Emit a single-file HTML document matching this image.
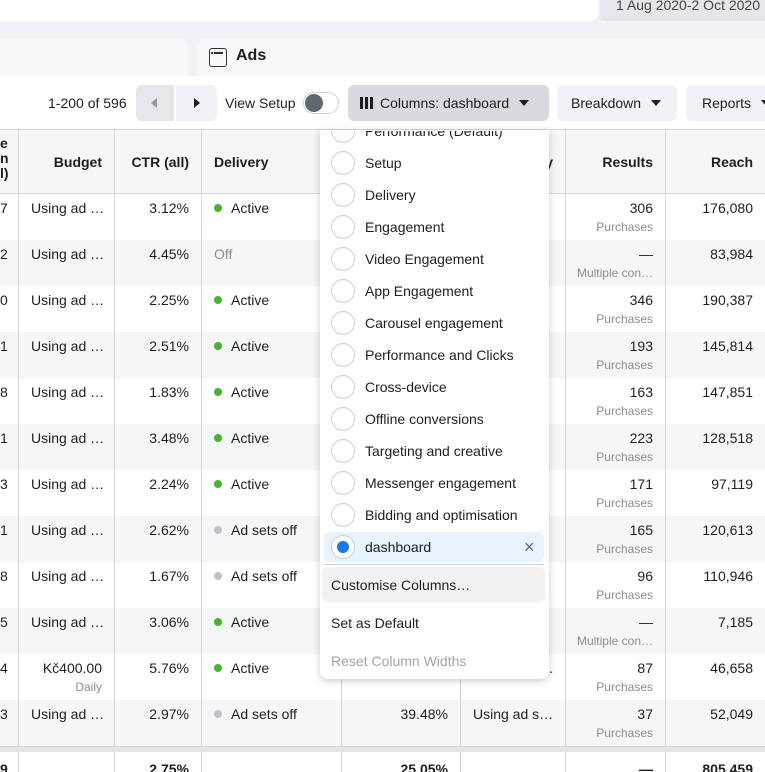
<!DOCTYPE html>
<html><head><meta charset="utf-8"><style>
*{box-sizing:border-box;margin:0;padding:0}
html,body{width:765px;height:772px;overflow:hidden}
body{background:#f0f2f5;font-family:"Liberation Sans",sans-serif;font-size:14px;color:#1c1e21;position:relative}
.a{position:absolute}
.row{position:absolute;left:0;width:765px;height:46px}
.c{position:absolute;top:0;height:100%;border-right:1px solid #d4d6da;padding-top:6px;white-space:nowrap}
.r{text-align:right;padding-right:12px}
.l{padding-left:12px}
.sub{font-size:12px;color:#8a8d91;margin-top:4px}
.dot{display:inline-block;width:8px;height:8px;border-radius:50%;background:#42b72a;margin-right:9px;vertical-align:1px}
.g{background:#bec3c9}
.btn{position:absolute;top:85px;height:36px;border-radius:6px;background:#f0f2f5;font-size:14px;line-height:36px;padding:0 14px;white-space:nowrap}
.tri{display:inline-block;width:0;height:0;border-left:5px solid transparent;border-right:5px solid transparent;border-top:6px solid #1c1e21;vertical-align:2px;margin-left:10px}
.mi{position:absolute;left:331px;height:32px;line-height:32px;width:210px}
.rad{position:absolute;left:0;top:4px;width:24px;height:24px;border:1px solid #ccd0d5;border-radius:50%;background:#fff}
.mi span{position:absolute;left:34px;top:0;white-space:nowrap}
</style></head><body>
<div class="a" style="left:0;top:0;width:598px;height:21px;background:#fff;border-radius:0 0 8px 0"></div>
<div class="a" style="left:600px;top:0;width:165px;height:21px;background:#e4e6e9;border-radius:0 0 0 6px;font-size:14px;line-height:10px;padding-left:16px;color:#444">1 Aug 2020-2 Oct 2020</div>
<div class="a" style="left:0;top:38px;width:188px;height:40px;background:#f7f8fa;border-radius:0 8px 0 0"></div>
<div class="a" style="left:197px;top:38px;width:568px;height:40px;background:#f7f8fa;border-radius:8px 0 0 0"></div>
<div class="a" style="left:209px;top:48px;width:18px;height:19px;border:1.5px solid #333;border-radius:3px"></div>
<div class="a" style="left:214px;top:52px;width:9px;height:1.5px;background:#333"></div>
<div class="a" style="left:211px;top:52px;width:2px;height:1.5px;background:#333"></div>
<div class="a" style="left:236px;top:47px;font-weight:bold;font-size:16px">Ads</div>
<div class="a" style="left:0;top:76px;width:765px;height:54px;background:#fff"></div>
<div class="a" style="left:48px;top:95px">1-200 of 596</div>
<div class="a" style="left:136px;top:85px;width:38px;height:36px;background:#e4e6e9;border-radius:6px 0 0 6px"></div>
<div class="a" style="left:176px;top:85px;width:41px;height:36px;background:#f0f2f5;border-radius:0 6px 6px 0"></div>
<div class="a" style="left:151px;top:98px;width:0;height:0;border-top:5px solid transparent;border-bottom:5px solid transparent;border-right:6px solid #999"></div>
<div class="a" style="left:194px;top:98px;width:0;height:0;border-top:5px solid transparent;border-bottom:5px solid transparent;border-left:6px solid #1c1e21"></div>
<div class="a" style="left:225px;top:95px">View Setup</div>
<div class="a" style="left:303px;top:92px;width:36px;height:22px;border:1px solid #ccd0d5;border-radius:11px;background:#fff"></div>
<div class="a" style="left:305px;top:94px;width:18px;height:18px;border-radius:50%;background:#606770"></div>
<div class="btn" style="left:348px;width:201px;background:#d8dadf;padding-left:12px"><span style="display:inline-block;width:3px;height:12px;background:#1c1e21;box-shadow:5px 0 #1c1e21,10px 0 #1c1e21;margin-right:17px;vertical-align:-1px"></span>Columns: dashboard<span class="tri"></span></div>
<div class="btn" style="left:557px;width:120px">Breakdown<span class="tri"></span></div>
<div class="btn" style="left:686px;width:100px;padding-left:16px">Reports<span class="tri"></span></div>
<div class="a" style="left:0;top:129px;width:765px;height:1px;background:#d4d6da"></div>

<div class="row" style="top:130px;height:64px;background:#f5f6f7;border-bottom:1px solid #d4d6da;font-weight:bold">
<div class="c" style="left:0;width:19px;padding-top:6px;line-height:15px;font-size:14px">e<br>n<br>l)</div>
<div class="c r" style="left:19px;width:96px;padding-top:24px">Budget</div>
<div class="c r" style="left:115px;width:87px;padding-top:24px">CTR (all)</div>
<div class="c l" style="left:202px;width:140px;padding-top:24px">Delivery</div>
<div class="c" style="left:342px;width:119px"></div>
<div class="c r" style="left:461px;width:105px;padding-top:24px">y</div>
<div class="c r" style="left:566px;width:100px;padding-top:24px">Results</div>
<div class="c r" style="left:666px;width:99px;padding-top:24px;border:0">Reach</div>
</div>

<div id="rows"></div>
<script>
var d=[["7","Using ad …","3.12%","a","Active","306","Purchases","176,080"],
["2","Using ad …","4.45%","o","Off","—","Multiple con…","83,984"],
["0","Using ad …","2.25%","a","Active","346","Purchases","190,387"],
["1","Using ad …","2.51%","a","Active","193","Purchases","145,814"],
["8","Using ad …","1.83%","a","Active","163","Purchases","147,851"],
["1","Using ad …","3.48%","a","Active","223","Purchases","128,518"],
["3","Using ad …","2.24%","a","Active","171","Purchases","97,119"],
["1","Using ad …","2.62%","g","Ad sets off","165","Purchases","120,613"],
["8","Using ad …","1.67%","g","Ad sets off","96","Purchases","110,946"],
["5","Using ad …","3.06%","a","Active","—","Multiple con…","7,185"],
["4","K","5.76%","a","Active","87","Purchases","46,658"],
["3","Using ad …","2.97%","g","Ad sets off","37","Purchases","52,049"]];
var h="";
d.forEach(function(r,i){
var t=194+i*46,bg=i%2?"#f5f6f7":"#fff";
var b=r[1]=="K"?'Kč400.00<div class="sub">Daily</div>':r[1];
var del=r[3]=="o"?'<span style="color:#8a8d91">Off</span>':'<span class="dot'+(r[3]=="g"?' g':'')+'"></span>'+r[4];
h+='<div class="row" style="top:'+t+'px;background:'+bg+'">'+
'<div class="c" style="left:0;width:19px">'+r[0]+'</div>'+
'<div class="c l" style="left:19px;width:96px;'+(r[1]=="K"?'text-align:right;padding-right:12px':'')+'">'+b+'</div>'+
'<div class="c r" style="left:115px;width:87px">'+r[2]+'</div>'+
'<div class="c l" style="left:202px;width:140px">'+del+'</div>'+
'<div class="c r" style="left:342px;width:119px">'+(i==11?'39.48%':'')+'</div>'+
'<div class="c l" style="left:461px;width:105px">'+(i==11?'Using ad s…':(i==10?'<span style="position:absolute;left:88px">.</span>':''))+'</div>'+
'<div class="c r" style="left:566px;width:100px">'+r[5]+'<div class="sub">'+r[6]+'</div></div>'+
'<div class="c r" style="left:666px;width:99px;border:0">'+r[7]+'</div></div>';
});
h+='<div class="row" style="top:746px;height:6px;background:#e4e6e9;border-top:1px solid #d4d6da"></div>';
h+='<div class="row" style="top:752px;height:20px;background:#fff;font-weight:bold">'+
'<div class="c" style="left:0;width:19px;padding-top:9px">9</div><div class="c" style="left:19px;width:96px"></div>'+
'<div class="c r" style="left:115px;width:87px;padding-top:9px">2.75%</div><div class="c" style="left:202px;width:140px"></div>'+
'<div class="c r" style="left:342px;width:119px;padding-top:9px">25.05%</div><div class="c" style="left:461px;width:105px"></div>'+
'<div class="c r" style="left:566px;width:100px;padding-top:9px">—</div><div class="c r" style="left:666px;width:99px;border:0;padding-top:9px">805,459</div></div>';
document.getElementById("rows").innerHTML=h;
</script>

<div class="a" style="left:320px;top:130px;width:229px;height:549px;background:#fff;border-radius:0 0 8px 8px;box-shadow:0 2px 8px rgba(0,0,0,.2);overflow:hidden">
</div>
<div class="a" style="left:324px;top:532px;width:220px;height:30px;background:#e7f3ff;border-radius:6px"></div>
<div class="a" style="left:324px;top:564px;width:220px;height:1px;background:#ccd0d5"></div>
<div class="a" style="left:322px;top:567px;width:223px;height:35px;background:#f2f2f2;border-radius:6px"></div>
<div style="position:absolute;left:0;top:0;width:765px;height:772px;clip-path:inset(131px 0 0 0)">
<div class="mi" style="top:115px"><div class="rad"></div><span>Performance (Default)</span></div>
<div class="mi" style="top:147px"><div class="rad"></div><span>Setup</span></div>
<div class="mi" style="top:179px"><div class="rad"></div><span>Delivery</span></div>
<div class="mi" style="top:211px"><div class="rad"></div><span>Engagement</span></div>
<div class="mi" style="top:243px"><div class="rad"></div><span>Video Engagement</span></div>
<div class="mi" style="top:275px"><div class="rad"></div><span>App Engagement</span></div>
<div class="mi" style="top:307px"><div class="rad"></div><span>Carousel engagement</span></div>
<div class="mi" style="top:339px"><div class="rad"></div><span>Performance and Clicks</span></div>
<div class="mi" style="top:371px"><div class="rad"></div><span>Cross-device</span></div>
<div class="mi" style="top:403px"><div class="rad"></div><span>Offline conversions</span></div>
<div class="mi" style="top:435px"><div class="rad"></div><span>Targeting and creative</span></div>
<div class="mi" style="top:467px"><div class="rad"></div><span>Messenger engagement</span></div>
<div class="mi" style="top:499px"><div class="rad"></div><span>Bidding and optimisation</span></div>
<div class="mi" style="top:531px"><div class="rad"></div><div class="a" style="left:6px;top:10px;width:12px;height:12px;border-radius:50%;background:#1877f2"></div><span>dashboard</span><span style="left:193px;font-size:18px;color:#606770">×</span></div>
</div>
<div class="a" style="left:331px;top:577px">Customise Columns…</div>
<div class="a" style="left:331px;top:615px">Set as Default</div>
<div class="a" style="left:331px;top:653px;color:#a0a3a8">Reset Column Widths</div>
</body></html>
